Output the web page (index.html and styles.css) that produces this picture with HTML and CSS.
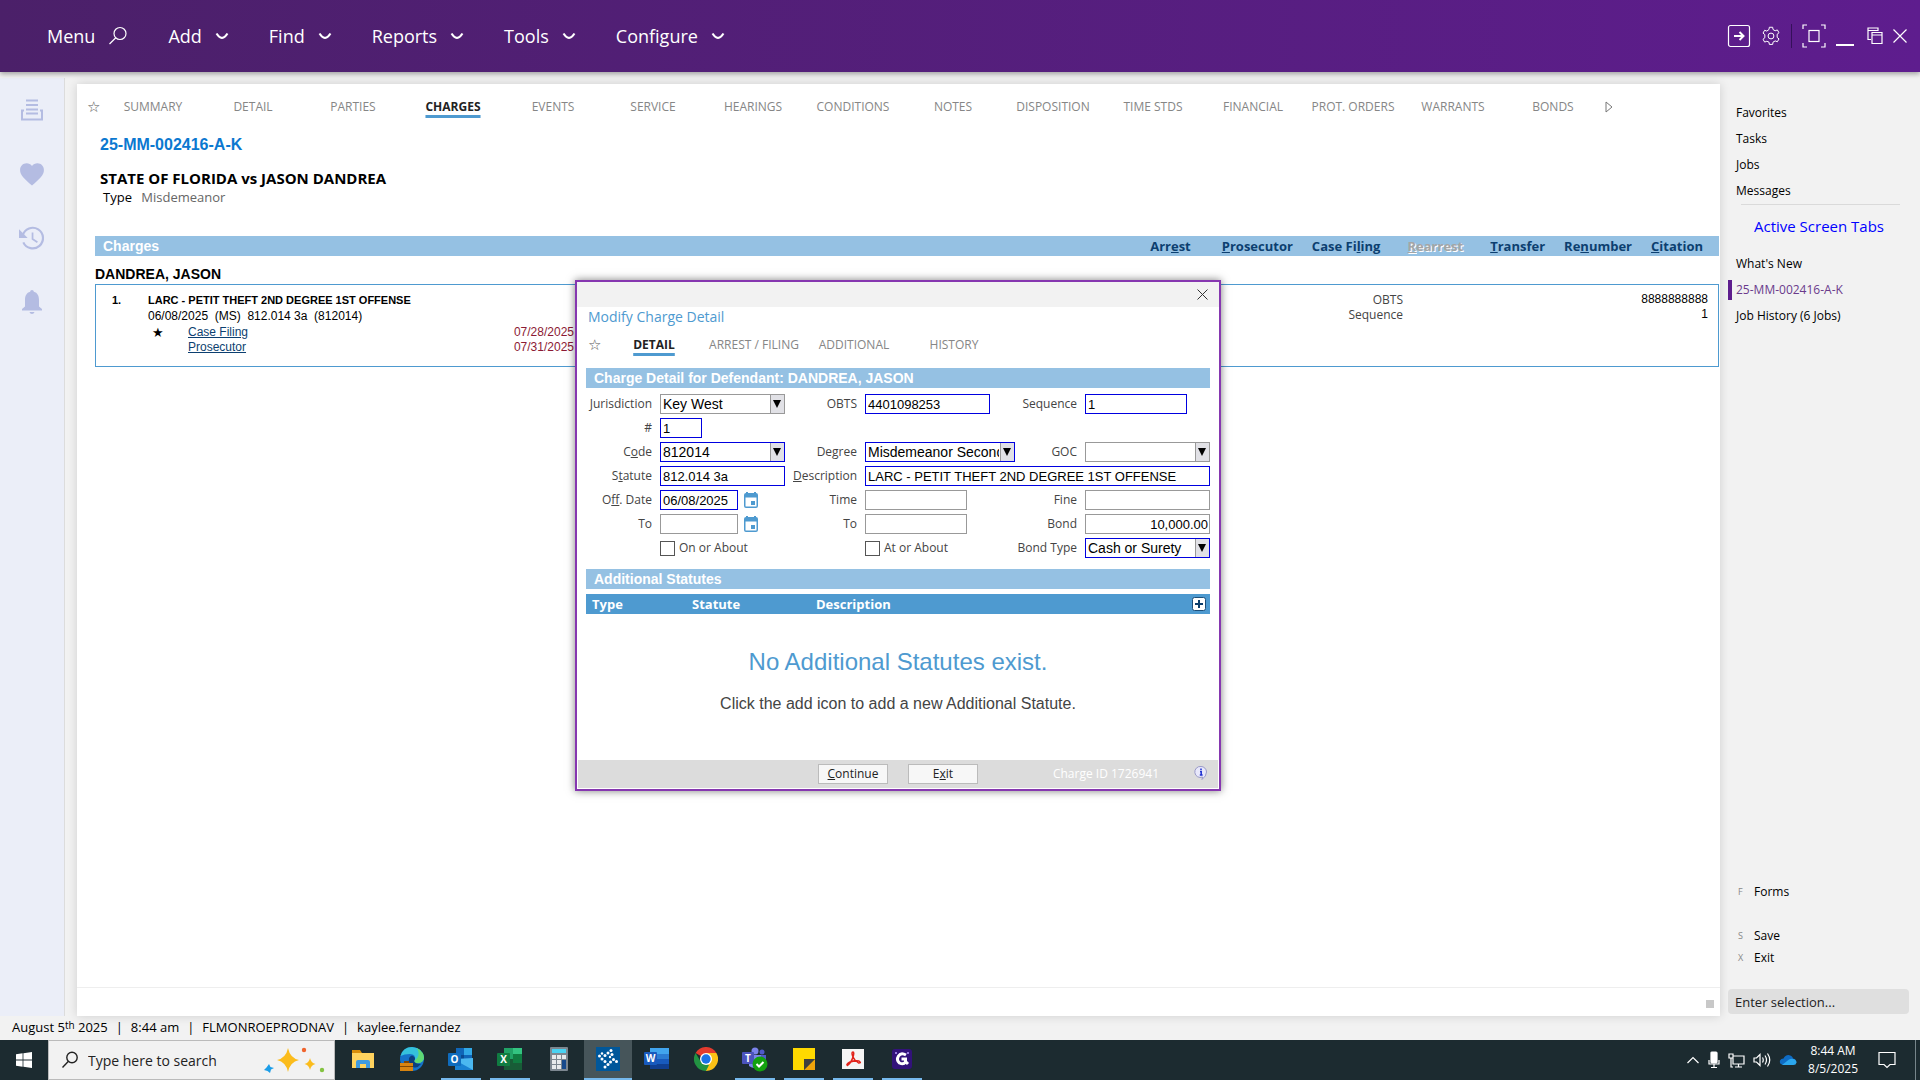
FILE: index.html
```html
<!DOCTYPE html>
<html lang="en">
<head>
    <meta charset="UTF-8">
    <title>25-MM-002416-A-K</title>
    <link rel="stylesheet" href="styles.css">
</head>
<body>
    <header class="topbar">
        <nav class="menu">
            <button class="menu_item">Menu <svg width="20" height="20" viewBox="0 0 20 20"><circle cx="12" cy="7.5" r="6"/><path d="M7.8 11.8L1.5 18"/></svg></button>
            <button class="menu_item">Add <svg width="14" height="8" viewBox="0 0 14 8"><path class="bold" d="M1.5 1.5Q4 5.5 7 6Q10 5.5 12.5 1.5"/></svg></button>
            <button class="menu_item">Find <svg width="14" height="8" viewBox="0 0 14 8"><path class="bold" d="M1.5 1.5Q4 5.5 7 6Q10 5.5 12.5 1.5"/></svg></button>
            <button class="menu_item">Reports <svg width="14" height="8" viewBox="0 0 14 8"><path class="bold" d="M1.5 1.5Q4 5.5 7 6Q10 5.5 12.5 1.5"/></svg></button>
            <button class="menu_item">Tools <svg width="14" height="8" viewBox="0 0 14 8"><path class="bold" d="M1.5 1.5Q4 5.5 7 6Q10 5.5 12.5 1.5"/></svg></button>
            <button class="menu_item">Configure <svg width="14" height="8" viewBox="0 0 14 8"><path class="bold" d="M1.5 1.5Q4 5.5 7 6Q10 5.5 12.5 1.5"/></svg></button>
        </nav>
        <div class="win_tools">
            <button aria-label="Sign out"><svg width="24" height="24" viewBox="0 0 24 24"><rect x="1.5" y="1.5" width="21" height="21" rx="2"/><path class="bold" d="M7 12h9M12.5 8l4 4-4 4"/></svg></button>
            <button aria-label="Settings"><svg width="20" height="20" viewBox="0 0 24 24"><circle cx="12" cy="12" r="3.5"/><path d="M9.6 4.2L10 1.5h4l.4 2.7 2.6 1.5 2.6-1 2 3.4-2.2 1.8v3.8l2.2 1.8-2 3.4-2.6-1-2.6 1.5-.4 2.7h-4l-.4-2.7L7 18.3l-2.6 1-2-3.4 2.2-1.8v-3.8L2.4 8.5l2-3.4 2.6 1z"/></svg></button>
            <span class="split"></span>
            <button aria-label="Full screen"><svg width="24" height="24" viewBox="0 0 24 24"><path d="M1 5V1h4M19 1h4v4M23 19v4h-4M5 23H1v-4"/><rect x="7" y="6.5" width="10" height="11"/></svg></button>
            <button class="minimize" aria-label="Minimize"><svg width="18" height="24" viewBox="0 0 18 24"><path class="bold" d="M0 21h18"/></svg></button>
            <button aria-label="Restore"><svg width="16" height="18" viewBox="0 0 16 18"><path d="M4 12.5H1V1h10v3M1 3.5h10M5 5.5h10v11H5zM5 8h10"/></svg></button>
            <button aria-label="Close"><svg width="14" height="14" viewBox="0 0 14 14"><path d="M.5 .5l13 13M13.5 .5l-13 13"/></svg></button>
        </div>
    </header>

    <div class="workspace">
        <aside class="rail">
            <button aria-label="Recent forms"><svg width="24" height="24" viewBox="0 0 24 24"><path d="M6 2.5h12M6 7h12M6 11.5h12M6 15.500h12" stroke-width="2.2"/><path d="M4 12.5H2v9h20v-9h-2" stroke-width="2"/></svg></button>
            <button aria-label="Favorites"><svg width="26" height="26" viewBox="0 0 24 24"><path class="solid" d="M12 22.5C5 16.5 1 13 1 8.2 1 4.6 3.6 2 7 2c2 0 3.9 1 5 2.5C13.1 3 15 2 17 2c3.4 0 6 2.6 6 6.2 0 4.8-4 8.3-11 14.3z"/></svg></button>
            <button aria-label="History"><svg width="26" height="26" viewBox="0 0 24 24"><path d="M3.5 9.5A9.5 9.5 0 1 1 4 16" stroke-width="2"/><path class="solid" d="M0 4v8h8z"/><path d="M12.5 7v6l4.5 3" stroke-width="1.6"/></svg></button>
            <button aria-label="Notifications"><svg width="24" height="26" viewBox="0 0 24 26"><path class="solid" d="M12 1c1 0 1.8.8 1.8 1.8C17.5 3.7 19 7 19 11v6.5l3 2.5v1.5H2V20l3-2.5V11c0-4 1.5-7.3 5.2-8.2C10.2 1.8 11 1 12 1zM9.5 23h5c-.4 1.3-1.3 2-2.5 2s-2.1-.7-2.5-2z"/></svg></button>
        </aside>

        <main class="panel">
            <nav class="tabs">
                <span class="tab_star">☆</span>
                <a href="#">SUMMARY</a><a href="#">DETAIL</a><a href="#">PARTIES</a><a href="#" class="on">CHARGES</a><a href="#">EVENTS</a><a href="#">SERVICE</a><a href="#">HEARINGS</a><a href="#">CONDITIONS</a><a href="#">NOTES</a><a href="#">DISPOSITION</a><a href="#">TIME STDS</a><a href="#">FINANCIAL</a><a href="#">PROT. ORDERS</a><a href="#">WARRANTS</a><a href="#">BONDS</a>
                <button class="tab_next" aria-label="More tabs"><svg width="8" height="12" viewBox="0 0 8 12"><path d="M1 1v10l6-5z"/></svg></button>
            </nav>
            <div class="case_head">
                <h1>25-MM-002416-A-K</h1>
                <h2>STATE OF FLORIDA vs JASON DANDREA</h2>
                <p>Type <span>Misdemeanor</span></p>
            </div>
            <section class="charges">
                <div class="bar">
                    <h3>Charges</h3>
                    <div class="bar_links">
                        <a href="#">Arr<u>e</u>st</a>
                        <a href="#"><u>P</u>rosecutor</a>
                        <a href="#">Case Fi<u>l</u>ing</a>
                        <a class="off"><u>R</u>earrest</a>
                        <a href="#"><u>T</u>ransfer</a>
                        <a href="#">Re<u>n</u>umber</a>
                        <a href="#"><u>C</u>itation</a>
                    </div>
                </div>
                <h4>DANDREA, JASON</h4>
                <div class="charge">
                    <div class="charge_no">1.</div>
                    <div class="charge_info">
                        <b>LARC - PETIT THEFT 2ND DEGREE 1ST OFFENSE</b>
                        <p>06/08/2025 &nbsp;(MS) &nbsp;812.014 3a &nbsp;(812014)</p>
                        <div class="filing"><i>★</i><a href="#">Case Filing</a><time>07/28/2025</time></div>
                        <div class="filing"><i></i><a href="#">Prosecutor</a><time>07/31/2025</time></div>
                    </div>
                    <dl class="charge_nums">
                        <dt>OBTS</dt><dd>8888888888</dd>
                        <dt>Sequence</dt><dd>1</dd>
                    </dl>
                </div>
            </section>
            <div class="panel_foot"><span></span></div>
        </main>

        <aside class="side">
            <nav class="side_list">
                <a href="#">Favorites</a>
                <a href="#">Tasks</a>
                <a href="#">Jobs</a>
                <a href="#">Messages</a>
            </nav>
            <h3>Active Screen Tabs</h3>
            <nav class="side_list">
                <a href="#">What's New</a>
                <a href="#" class="on">25-MM-002416-A-K</a>
                <a href="#">Job History (6 Jobs)</a>
            </nav>
            <nav class="side_keys">
                <a href="#" class="gap"><kbd>F</kbd>Forms</a>
                <a href="#"><kbd>S</kbd>Save</a>
                <a href="#"><kbd>X</kbd>Exit</a>
            </nav>
            <input class="side_input" type="text" aria-label="Enter selection" placeholder="Enter selection...">
        </aside>
    </div>

    <div class="status">
        <span>August 5<sup>th</sup> 2025</span><i>|</i><span>8:44 am</span><i>|</i><span>FLMONROEPRODNAV</span><i>|</i><span>kaylee.fernandez</span>
    </div>

    <footer class="taskbar">
        <button class="start" aria-label="Start"><svg width="16" height="16" viewBox="0 0 16 16"><path fill="#fff" d="M0 2.2l6.6-.9v6.3H0zM7.4 1.2L16 0v7.600H7.4zM0 8.400h6.600v6.300L0 13.800zM7.400 8.400H16V16l-8.600-1.200z"/></svg></button>
        <label class="find">
            <svg width="18" height="18" viewBox="0 0 18 18"><circle cx="11" cy="6.5" r="5.2" fill="none" stroke="#222" stroke-width="1.4"/><path d="M7.2 10.5L1.5 16.5" stroke="#222" stroke-width="1.4"/></svg>
            <input type="text" placeholder="Type here to search" aria-label="Type here to search">
            <svg width="62" height="32" viewBox="0 0 62 32"><path fill="#fbbc1c" d="M24 4q2 10 11 12-9 2-11 12-2-10-11-12 9-2 11-12zM46 14q1 5 5.500 6-4.500 1-5.500 6-1-5-5.500-6 4.500-1 5.500-6z"/><path fill="#1b9de8" d="M5 20l1.500 3 3.500 1-3 1.500L6 29l-2.500-2L0 26l2.500-2.500z"/><circle cx="40" cy="6" r="2.2" fill="#f0642d"/><circle cx="58" cy="26" r="2.2" fill="#84c341"/></svg>
        </label>
        <nav class="apps">
            <button aria-label="File Explorer"><svg width="24" height="24" viewBox="0 0 24 24"><path fill="#d98e0a" d="M1 3h8l2 3v4H1z"/><path fill="#ffd35e" d="M1 6h22v15H1z"/><path fill="#3f9be0" d="M5 21v-6q0-2 2-2h10q2 0 2 2v6h-4v-4H9v4z"/></svg></button>
            <button aria-label="Edge"><svg width="26" height="26" viewBox="0 0 26 26"><circle cx="13" cy="13" r="12" fill="#1572c9"/><path fill="#35c1dc" d="M1.5 10Q4 1 13 1q11 1 12 11-1 6-8 5-3-1-1-3 1-6-5-6-6 0-9.500 2z"/><path fill="#5fd873" d="M18 2q7 4 7 10-1 6-8 5-3-1-1-3 6-4 2-12z"/><path fill="#0c3f7c" d="M10 12q3-5 6 0 0 2-1 3 1 3 7 3-4 5-8 3-5-3-4-9z"/><path fill="#d78410" d="M1 17h13v8H1z"/><path fill="#7d4604" d="M5 15h5v2H5zM1 20h13v1H1z"/></svg></button>
            <button class="run" aria-label="Outlook"><svg width="26" height="24" viewBox="0 0 26 24"><path fill="#1066b8" d="M8 1h16v13H8z"/><path fill="#32a9e7" d="M16 1h8v7h-8z"/><path fill="#0a4a92" d="M8 8h8v7H8z"/><path fill="#4bb8f0" d="M7 12l18-1v12H8z"/><path fill="#1a82d2" d="M7 13l18 10H7z"/><rect y="6" width="13" height="13" rx="1" fill="#0f6cbd"/><text class="gl" x="6.5" y="16">O</text></svg></button>
            <button class="run" aria-label="Excel"><svg width="26" height="24" viewBox="0 0 26 24"><path fill="#21a366" d="M7 1h9v11H7z"/><path fill="#33c481" d="M16 1h9v6h-9z"/><path fill="#107c41" d="M16 7h9v9h-9z"/><path fill="#185c37" d="M7 12h9v4h9v7H7z"/><rect y="6" width="13" height="13" rx="1" fill="#107c41"/><text class="gl" x="6.5" y="16">X</text></svg></button>
            <button aria-label="Calculator"><svg width="20" height="24" viewBox="0 0 20 24"><rect x="1" width="18" height="24" rx="1" fill="#7c8790"/><path fill="#48d2f2" d="M3 2h14v4H3z"/><path fill="#e7eaec" d="M3 8h4v4H3zM8 8h4v4H8zM13 8h4v4h-4zM3 13h4v4H3zM8 13h4v4H8zM3 18h4v4H3zM8 18h4v4H8z"/><path fill="#174a8c" d="M13 13h4v9h-4z"/></svg></button>
            <button class="run cur" aria-label="Court case manager"><svg width="24" height="24" viewBox="0 0 24 24"><path fill="#00579a" d="M0 0h24v24H0z"/><g fill="#fff"><circle cx="15" cy="3.5" r="1.5"/><circle cx="16" cy="7.5" r="1.5"/><circle cx="12" cy="6" r="1.5"/><circle cx="9" cy="8.5" r="1.5"/><circle cx="6" cy="6.500" r="1.2"/><circle cx="3.5" cy="9" r="1.5"/><circle cx="6" cy="12" r="1.5"/><circle cx="9" cy="14.500" r="1.5"/><circle cx="12" cy="17.500" r="1.5"/><circle cx="9" cy="20" r="1.5"/><circle cx="14.500" cy="15" r="1.5"/><circle cx="17.500" cy="12.500" r="1.5"/><circle cx="20.500" cy="14.500" r="1.5"/><circle cx="14" cy="10" r="1.2"/></g></svg></button>
            <button aria-label="Word"><svg width="26" height="24" viewBox="0 0 26 24"><path fill="#41a5ee" d="M6 1h19v6H6z"/><path fill="#2b7cd3" d="M6 7h19v5H6z"/><path fill="#185abd" d="M6 12h19v5H6z"/><path fill="#103f91" d="M6 17h19v5H6z"/><rect y="5" width="13" height="13" rx="1" fill="#185abd"/><text class="gl" x="6.5" y="15">W</text></svg></button>
            <button aria-label="Chrome"><svg width="24" height="24" viewBox="0 0 24 24"><path fill="#e33b2e" d="M12 12L1.6 6a12 12 0 0 1 20.800 0z"/><path fill="#fbc116" d="M12 12l.5-6h9.900A12 12 0 0 1 12 24z"/><path fill="#229342" d="M1.6 6L7 15l8 3-3 6A12 12 0 0 1 1.6 6z"/><circle cx="12" cy="12" r="6" fill="#fff"/><circle cx="12" cy="12" r="4.7" fill="#1a73e8"/></svg></button>
            <button class="run" aria-label="Teams"><svg width="28" height="26" viewBox="0 0 28 26"><circle cx="14" cy="5" r="3.5" fill="#7b83eb"/><circle cx="21" cy="6" r="2.5" fill="#5059c9"/><path fill="#5059c9" d="M15 9h10v8q-4 6-10 2z"/><path fill="#7b83eb" d="M8 9h12v9q-5 7-12 2z"/><rect x="1" y="6" width="12" height="12" rx="1" fill="#4b53bc"/><text class="gl" x="7" y="15.5">T</text><circle cx="19" cy="18" r="7.5" fill="#13a10e"/><path fill="none" stroke="#fff" stroke-width="2" d="M15.5 18l2.5 2.5 4.500-4.500"/></svg></button>
            <button class="run" aria-label="Sticky Notes"><svg width="22" height="22" viewBox="0 0 22 22"><path fill="#ffd900" d="M0 0h22v11L11 22H0z"/><path fill="#f0a30a" d="M22 11v11H11z"/><path fill="#3f3f3f" d="M11 11h11L11 22z"/></svg></button>
            <button class="run" aria-label="Acrobat"><svg width="22" height="20" viewBox="0 0 22 20"><path fill="#f5f5f5" d="M0 0h22v20H0z"/><path fill="none" stroke="#e2231a" stroke-width="1.5" d="M11 3q-2 0 0 5-2 6-5.500 8.500-2-1 2.500-3.500 4-1.500 9-1 3 2-.5 2Q12 11 11 8q1.500-5 0-5z"/></svg></button>
            <button class="run" aria-label="Snagit"><svg width="20" height="20" viewBox="0 0 20 20"><rect width="20" height="20" rx="3" fill="#32127a"/><path fill="none" stroke="#fff" stroke-width="3" d="M14 6Q9 3 6.5 7t1 7q4 2 6-1v-3h-4M13 12l3 3"/><circle cx="4" cy="4" r="1" fill="#b79cff"/><circle cx="16" cy="4" r="1" fill="#b79cff"/></svg></button>
        </nav>
        <div class="tray">
            <svg width="14" height="8" viewBox="0 0 14 8"><path d="M1.5 7L7 1.5 12.5 7"/></svg>
            <svg width="12" height="18" viewBox="0 0 12 18"><rect x="3" y="1" width="6" height="11" rx="1" fill="#fff"/><path d="M1 9v4h10V9M6 13v3M3 16.5h6"/></svg>
            <svg width="17" height="15" viewBox="0 0 17 15"><path d="M5 3h11v8H5zM10.500 11v3M7 14h7M1 1h4v4H1zM3 5v9h2"/></svg>
            <svg width="18" height="16" viewBox="0 0 18 16"><path d="M1 6h2.500L7 2.500v11L3.500 10H1zM9.500 5.500q1.500 2.500 0 5M12 3.500q3 4.500 0 9M14.500 1.500q4.500 6.500 0 13"/></svg>
            <svg width="18" height="12" viewBox="0 0 18 12"><path class="cloud" fill="#0f6cc4" d="M4 11Q0 10 1 6.500 2 4.500 4.500 4.500 6 1 9.500 1q4 .5 4.500 3.500 3.500.5 3 4z"/><path class="cloud" fill="#2ba7ee" d="M3 11l7-5.500q2-1 4.500-.5 3 1 3 3.500-.5 2.500-3 2.500z"/></svg>
            <div class="clock">8:44 AM<br>8/5/2025</div>
            <svg width="18" height="18" viewBox="0 0 18 18"><path d="M1 1.500h16v12h-5L9 16.500l-3-3H1z"/></svg>
            <span class="desk"></span>
        </div>
    </footer>

    <div class="dialog" role="dialog" aria-label="Modify Charge Detail">
        <div class="dlg_top"><button aria-label="Close"><svg width="11" height="11" viewBox="0 0 11 11"><path d="M.5 .5l10 10M10.5 .5l-10 10"/></svg></button></div>
        <div class="dlg_body">
            <h2>Modify Charge Detail</h2>
            <nav class="tabs">
                <span class="tab_star">☆</span>
                <a href="#" class="on">DETAIL</a><a href="#">ARREST / FILING</a><a href="#">ADDITIONAL</a><a href="#">HISTORY</a>
            </nav>
            <div class="bar"><h3>Charge Detail for Defendant: DANDREA, JASON</h3></div>
            <form class="form">
                <label for="jur">Jurisdiction</label>
                <span><select id="jur" class="w125"><option>Key West</option></select></span>
                <label for="obts">OBTS</label>
                <span><input id="obts" class="w125 req" type="text" value="4401098253"></span>
                <label for="seq">Sequence</label>
                <span><input id="seq" class="w102 req" type="text" value="1"></span>

                <label for="num">#</label>
                <span class="full"><input id="num" class="w42 req" type="text" value="1"></span>

                <label for="code">C<u>o</u>de</label>
                <span><select id="code" class="w125 req"><option>812014</option></select></span>
                <label for="deg">De<u>g</u>ree</label>
                <span><select id="deg" class="w150 req"><option>Misdemeanor Second Degree</option></select></span>
                <label for="goc">GOC</label>
                <span><select id="goc" class="w125"><option></option></select></span>

                <label for="sta">S<u>t</u>atute</label>
                <span><input id="sta" class="w125 req" type="text" value="812.014 3a"></span>
                <label for="desc"><u>D</u>escription</label>
                <span class="wide"><input id="desc" class="req" type="text" value="LARC - PETIT THEFT 2ND DEGREE 1ST OFFENSE"></span>

                <label for="off">O<u>f</u>f. Date</label>
                <span><input id="off" class="w78 req" type="text" value="06/08/2025"><button type="button" class="cal" aria-label="Pick date"><svg width="14" height="16" viewBox="0 0 14 16"><path d="M0 3q0-2 2-2V0h2v1h6V0h2v1q2 0 2 2v11q0 2-2 2H2q-2 0-2-2zM1.5 5.5V14q0 .5.5.5h10q.5 0 .5-.5V5.5zM7 9h4v4H7z" fill-rule="evenodd"/></svg></button></span>
                <label for="time">Time</label>
                <span><input id="time" class="w102" type="text"></span>
                <label for="fine">Fine</label>
                <span><input id="fine" class="w125" type="text"></span>

                <label for="to">To</label>
                <span><input id="to" class="w78" type="text"><button type="button" class="cal" aria-label="Pick date"><svg width="14" height="16" viewBox="0 0 14 16"><path d="M0 3q0-2 2-2V0h2v1h6V0h2v1q2 0 2 2v11q0 2-2 2H2q-2 0-2-2zM1.5 5.5V14q0 .5.5.5h10q.5 0 .5-.5V5.5zM7 9h4v4H7z" fill-rule="evenodd"/></svg></button></span>
                <label for="to2">To</label>
                <span><input id="to2" class="w102" type="text"></span>
                <label for="bond">Bond</label>
                <span><input id="bond" class="w125 num" type="text" value="10,000.00"></span>

                <i></i>
                <span><label class="chk"><input type="checkbox">On or About</label></span>
                <i></i>
                <span><label class="chk"><input type="checkbox">At or About</label></span>
                <label for="bt">Bond Type</label>
                <span><select id="bt" class="w125 req"><option>Cash or Surety</option></select></span>
            </form>
            <div class="bar"><h3>Additional Statutes</h3></div>
            <table class="stat">
                <thead><tr><th class="c1">Type</th><th class="c2">Statute</th><th>Description</th><th class="c4"><button aria-label="Add statute"><svg width="14" height="14" viewBox="0 0 14 14"><rect x=".5" y=".5" width="13" height="13" rx="2" fill="#fff" stroke="#1d4f7a"/><path d="M7 3v8M3 7h8" stroke="#0b3d6b" stroke-width="2"/></svg></button></th></tr></thead>
            </table>
            <div class="empty">
                <p class="big">No Additional Statutes exist.</p>
                <p>Click the add icon to add a new Additional Statute.</p>
            </div>
        </div>
        <div class="dlg_foot">
            <div></div>
            <button class="btn"><u>C</u>ontinue</button>
            <button class="btn">E<u>x</u>it</button>
            <div class="dlg_id"><span>Charge ID 1726941</span><svg width="14" height="16" viewBox="0 0 14 16"><path d="M7 .5a5.5 5.5 0 0 1 5.5 5.500q0 4-4.500 7.500l.5-2.500A5.500 5.500 0 1 1 7 .5z" fill="#e8e8fb" stroke="#9a9ac8"/><path d="M7 2.500v1.500M6 5.500h1.200V9M5.800 9h2.800" stroke="#1c2fd0" stroke-width="1.5" fill="none"/></svg></div>
        </div>
    </div>
</body>
</html>
```
FILE: styles.css
```css
*{
    box-sizing: border-box;
}
body{
    margin: 0;
    height: 100vh;
    display: flex;
    flex-direction: column;
    background: #f2f2f2;
    font: 12px/16px "Open Sans", "Noto Sans", sans-serif;
    color: #000;
    overflow: hidden;
}
h1,h2,h3,h4,p,dl,dd{
    margin: 0;
}
a{
    color: inherit;
    text-decoration: none;
}
button{
    border: 0;
    padding: 0;
    background: none;
    color: inherit;
    font: inherit;
    display: inline-flex;
    align-items: center;
    justify-content: center;
}
svg{
    display: block;
    flex: none;
}

/* top menu */
.topbar{
    height: 72px;
    flex: none;
    display: flex;
    align-items: center;
    justify-content: space-between;
    padding: 0 13px 0 47px;
    background: linear-gradient(90deg, #4b2069, #5e1d8e);
    box-shadow: 0 2px 5px rgba(0,0,0,.35);
    color: #fff;
    z-index: 1;
}
.menu{
    display: flex;
    gap: 40px;
}
.menu_item{
    font-size: 18px;
    line-height: 28px;
    gap: 13px;
}
.topbar svg{
    fill: none;
    stroke: #fff;
    stroke-width: 1.2;
}
.topbar .bold{
    stroke-width: 2;
}
.win_tools{
    display: flex;
    align-items: center;
    gap: 10px;
}
.minimize{
    margin-right: 3px;
}
.split{
    width: 1px;
    height: 24px;
    background: #35105a;
}

/* body */
.workspace{
    flex: 1;
    min-height: 0;
    display: flex;
}
.rail{
    width: 65px;
    margin-top: 6px;
    padding-top: 19px;
    display: flex;
    flex-direction: column;
    align-items: center;
    gap: 38px;
    background: #ebeef8;
    border-right: 1px solid #dcdcdc;
}
.rail button{
    height: 26px;
}
.rail svg{
    fill: none;
    stroke: #b4bce2;
}
.rail .solid{
    fill: #b4bce2;
    stroke: none;
}
.panel{
    flex: 1;
    margin: 12px 0 0 12px;
    display: flex;
    flex-direction: column;
    background: #fff;
    box-shadow: 0 0 10px rgba(0,0,0,.15);
}
.tabs{
    display: flex;
    align-items: center;
    color: #868686;
    font-size: 12px;
}
.tabs a{
    width: 100px;
    display: flex;
    justify-content: center;
    white-space: nowrap;
    line-height: 16px;
}
.tabs .on{
    color: #222;
    font-weight: bold;
    text-decoration: underline;
    text-decoration-color: #4e9ad0;
    text-decoration-thickness: 3px;
    text-underline-offset: 4px;
}
.tab_star{
    width: 26px;
    padding-left: 10px;
    font: 15px/16px "DejaVu Sans", sans-serif;
    color: #555;
}
.panel .tabs{
    padding-top: 15px;
}
.tab_next{
    margin-left: 2px;
}
.tab_next svg{
    fill: none;
    stroke: #777;
}
.case_head{
    height: 121px;
    padding: 18px 0 0 23px;
}
.case_head h1{
    font: bold 16px/24px "Liberation Sans", sans-serif;
    color: #0b78d0;
}
.case_head h2{
    margin-top: 12px;
    font-size: 15px;
    line-height: 18px;
}
.case_head p{
    padding-left: 3px;
    font-size: 13px;
    line-height: 20px;
}
.case_head p span{
    margin-left: 6px;
    color: #666;
}
.charges{
    flex: 1;
    margin: 0 1px 0 18px;
}
.bar{
    height: 20px;
    padding: 0 16px 0 8px;
    display: flex;
    align-items: center;
    justify-content: space-between;
    background: #95c1e3;
    color: #fff;
}
.bar h3{
    font: bold 14px/20px "Liberation Sans", sans-serif;
}
.bar_links{
    display: flex;
    gap: 19px;
    font-size: 13px;
    font-weight: bold;
    color: #0c3f70;
}
.bar_links a:first-child{
    margin-right: 12px;
}
.bar_links .off{
    color: #a5a5a5;
    text-shadow: 1px 1px 0 #fff;
    margin: 0 8px;
}
.charges h4{
    padding-top: 9px;
    font: bold 14px/19px "Liberation Sans", sans-serif;
}
.charge{
    height: 83px;
    padding: 7px 10px 0 16px;
    display: flex;
    border: 1px solid #4e9ad0;
    font: 12px/16px "Liberation Sans", sans-serif;
}
.charge_no{
    width: 36px;
    font-size: 11px;
    font-weight: bold;
}
.charge_info{
    width: 426px;
}
.charge_info b{
    display: block;
    font-size: 11px;
}
.charge_info p{
    line-height: 17px;
}
.filing{
    display: flex;
    line-height: 15px;
}
.filing i{
    width: 40px;
    padding-left: 4px;
    font: 13px/15px "DejaVu Sans", sans-serif;
}
.filing a{
    color: #0c3f70;
    text-decoration: underline;
}
.filing time{
    margin-left: auto;
    color: #8c1a34;
}
.charge_nums{
    flex: 1;
    display: grid;
    grid-template-columns: 1fr 305px;
    align-content: start;
    line-height: 15px;
    text-align: right;
}
.charge_nums dt{
    font-family: "Open Sans", sans-serif;
    color: #444;
}
.panel_foot{
    height: 29px;
    padding: 12px 6px 0 0;
    display: flex;
    justify-content: flex-end;
    border-top: 1px solid #eee;
}
.panel_foot span{
    width: 8px;
    height: 8px;
    background: #c8c8c8;
}

/* right side */
.side{
    width: 200px;
    padding: 31px 11px 2px 8px;
    display: flex;
    flex-direction: column;
    font-size: 12px;
}
.side_list{
    display: flex;
    flex-direction: column;
}
.side_list a{
    padding-left: 4px;
    border-left: 4px solid transparent;
    line-height: 20px;
    margin-bottom: 6px;
}
.side_list .on{
    color: #6a3a8c;
    border-color: #5e1d8e;
}
.side h3{
    margin: -3px 9px 17px 13px;
    padding: 10px 0 0 13px;
    border-top: 1px solid #dadada;
    font-size: 15px;
    font-weight: normal;
    line-height: 22px;
    color: #00f;
}
.side_keys{
    margin-top: auto;
    margin-bottom: 20px;
    display: flex;
    flex-direction: column;
}
.side_keys a{
    padding-left: 10px;
    line-height: 22px;
    display: flex;
}
.side_keys .gap{
    margin-bottom: 22px;
}
.side_keys kbd{
    width: 16px;
    font: 9px/22px "Open Sans", sans-serif;
    color: #888;
}
.side_input{
    width: 100%;
    height: 25px;
    padding: 0 7px;
    border: 0;
    border-radius: 4px;
    background: #dfdfdf;
    font: 13px "Open Sans", sans-serif;
}
.side_input::placeholder,
.find input::placeholder{
    color: #222;
    opacity: 1;
}
.status{
    height: 24px;
    flex: none;
    padding-left: 12px;
    display: flex;
    gap: 8px;
    font-size: 13px;
    line-height: 22px;
}
.status i{
    font-style: normal;
}
.status sup{
    font-size: 10px;
    line-height: 0;
    vertical-align: 3px;
}

/* taskbar */
.taskbar{
    height: 40px;
    flex: none;
    display: flex;
    background: #1c2b30;
    color: #fff;
}
.start{
    width: 48px;
}
.find{
    width: 287px;
    padding: 0 8px 0 12px;
    display: flex;
    align-items: center;
    background: #f2f2f2;
    border: 1px solid #bbb;
}
.find input{
    flex: 1;
    min-width: 0;
    border: 0;
    padding: 0 0 0 9px;
    background: none;
    font: 14px "Open Sans", sans-serif;
}
.apps{
    margin-left: 4px;
    display: flex;
    gap: 1px;
}
.apps button{
    width: 48px;
    border-bottom: 2px solid transparent;
}
.apps .run{
    background: linear-gradient(#76b9ed, #76b9ed) center bottom / 40px 2px no-repeat border-box;
}
.apps .cur{
    background-color: #46555a;
    background-size: 48px 2px;
}
.gl{
    fill: #fff;
    font: bold 10px "Open Sans", sans-serif;
    text-anchor: middle;
}
.tray{
    margin-left: auto;
    padding-right: 4px;
    display: flex;
    align-items: center;
    gap: 8px;
}
.tray svg{
    fill: none;
    stroke: #fff;
    stroke-width: 1.2;
}
.tray .cloud{
    stroke: none;
}
.clock{
    margin: 0 12px 0 3px;
    text-align: center;
    font-size: 12px;
    line-height: 18px;
}
.desk{
    width: 1px;
    height: 40px;
    margin-left: 11px;
    background: #77858a;
}

/* dialog over the page */
.dialog{
    position: absolute;
    left: 575px;
    top: 280px;
    width: 646px;
    border: 2px solid #8637b0;
    background: #fff;
    box-shadow: 0 0 8px rgba(0,0,0,.5);
}
.dlg_top{
    height: 25px;
    padding-right: 11px;
    display: flex;
    justify-content: flex-end;
    background: #f2f2f2;
}
.dlg_top svg{
    fill: none;
    stroke: #333;
}
.dlg_body{
    padding: 0 9px;
}
.dlg_body h2{
    padding-left: 2px;
    font-size: 14px;
    font-weight: normal;
    line-height: 20px;
    color: #4e9ad0;
}
.dlg_body .tabs{
    height: 41px;
    padding-bottom: 5px;
}
.dlg_body .tab_star{
    width: 18px;
    padding-left: 2px;
}
.form{
    padding: 5px 0 10px;
    display: grid;
    grid-template-columns: 66px 125px 64px 142px 62px 1fr;
    grid-auto-rows: 22px;
    row-gap: 2px;
    column-gap: 8px;
    align-items: center;
}
.form > label{
    text-align: right;
    color: #444;
    white-space: nowrap;
}
.form span{
    display: flex;
    align-items: center;
}
.form .full{
    grid-column: span 5;
}
.form .wide{
    grid-column: span 3;
}
.form input,
.form select{
    height: 20px;
    width: 100%;
    margin: 0;
    padding: 0 2px;
    border: 1px solid #999;
    border-radius: 0;
    background: #fff;
    font: 13px "Liberation Sans", sans-serif;
    color: #000;
}
.form select{
    appearance: none;
    flex: none;
    padding-right: 15px;
    background: url("data:image/svg+xml,%3Csvg xmlns='http://www.w3.org/2000/svg' width='14' height='18'%3E%3Cpath fill='%23e1e1e6' d='M0 0h14v18H0z'/%3E%3Cpath fill='%23999' d='M0 0h1v18H0z'/%3E%3Cpath d='M3 5h8l-4 8z'/%3E%3C/svg%3E") right center no-repeat;
    font-size: 14px;
}
.form .req{
    border-color: #0000e0;
}
.form .num{
    text-align: right;
    padding-right: 1px;
}
.form .w42{ width: 42px; }
.form .w78{ width: 78px; }
.form .w102{ width: 102px; }
.form .w125{ width: 125px; }
.form .w150{ width: 150px; }
.cal{
    margin-left: 6px;
}
.cal svg{
    fill: #4e9ad0;
}
.chk{
    display: flex;
    align-items: center;
    gap: 4px;
    color: #444;
}
.form .chk input{
    appearance: none;
    width: 15px;
    height: 15px;
    border-color: #555;
}
.stat{
    width: 100%;
    margin-top: 5px;
    border-collapse: collapse;
    background: #4e9ad0;
    color: #fff;
    font-size: 13px;
}
.stat th{
    height: 20px;
    padding: 0;
    text-align: left;
    line-height: 18px;
}
.stat .c1{
    width: 106px;
    padding-left: 6px;
}
.stat .c2{
    width: 124px;
}
.stat .c4{
    width: 18px;
}
.stat button{
    display: flex;
}
.empty{
    height: 146px;
    padding-top: 32px;
    text-align: center;
    font: 16px/24px "Liberation Sans", sans-serif;
    color: #444;
}
.empty .big{
    margin-bottom: 14px;
    font-size: 24px;
    line-height: 32px;
    color: #4e9ad0;
}
.dlg_foot{
    margin: 0 1px 1px;
    height: 28px;
    display: grid;
    grid-template-columns: 1fr 70px 70px 1fr;
    column-gap: 20px;
    align-items: center;
    background: #dcdcdc;
}
.btn{
    height: 20px;
    background: #f7f7f7;
    border: 1px solid #bbb;
    color: #222;
}
.dlg_id{
    padding-right: 10px;
    display: flex;
    align-items: center;
    justify-content: flex-end;
    gap: 35px;
    color: #fff;
}
```
